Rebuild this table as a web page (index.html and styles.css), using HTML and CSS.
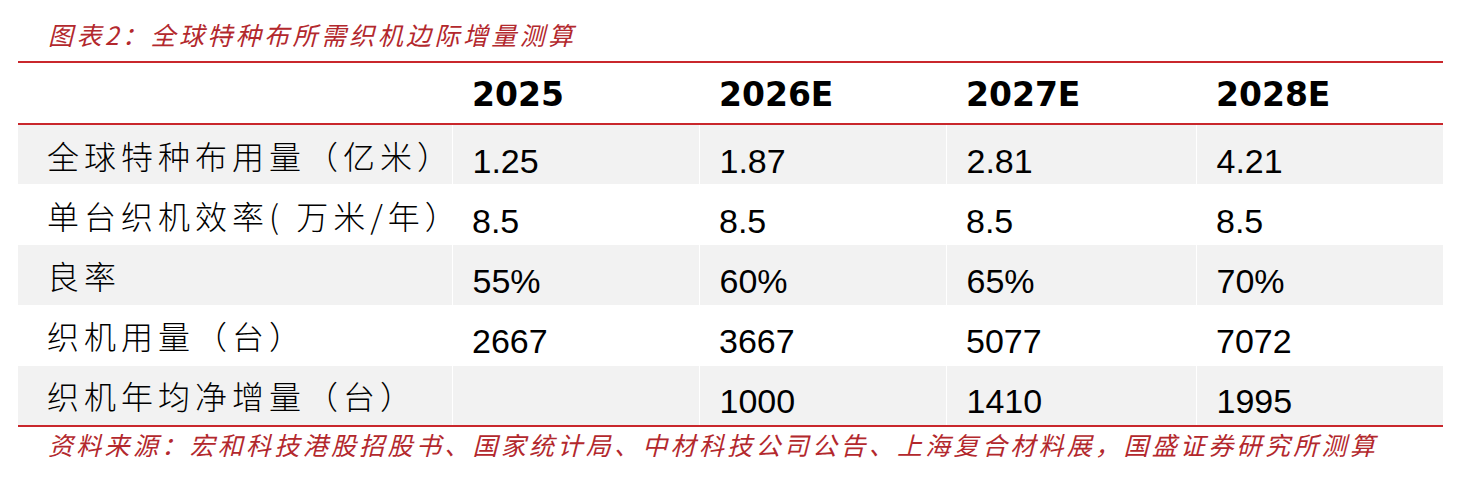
FILE: index.html
```html
<!DOCTYPE html>
<html lang="zh-CN">
<head>
<meta charset="utf-8">
<title>图表2</title>
<link rel="stylesheet" href="styles.css">
</head>
<body>
<div class="page">
  <div class="title">图表2：全球特种布所需织机边际增量测算</div>
  <table class="data">
    <colgroup>
      <col class="c-label">
      <col class="c-a">
      <col class="c-b">
      <col class="c-c">
      <col class="c-d">
    </colgroup>
    <thead>
      <tr class="head">
        <th></th>
        <th>2025</th>
        <th>2026E</th>
        <th>2027E</th>
        <th>2028E</th>
      </tr>
    </thead>
    <tbody>
      <tr class="grey">
        <td class="label">全球特种布用量（亿米）</td>
        <td>1.25</td><td>1.87</td><td>2.81</td><td>4.21</td>
      </tr>
      <tr>
        <td class="label">单台织机效率( 万米/年）</td>
        <td>8.5</td><td>8.5</td><td>8.5</td><td>8.5</td>
      </tr>
      <tr class="grey">
        <td class="label">良率</td>
        <td>55%</td><td>60%</td><td>65%</td><td>70%</td>
      </tr>
      <tr>
        <td class="label">织机用量（台）</td>
        <td>2667</td><td>3667</td><td>5077</td><td>7072</td>
      </tr>
      <tr class="grey last">
        <td class="label">织机年均净增量（台）</td>
        <td></td><td>1000</td><td>1410</td><td>1995</td>
      </tr>
    </tbody>
  </table>
  <div class="source">资料来源：宏和科技港股招股书、国家统计局、中材科技公司公告、上海复合材料展，国盛证券研究所测算</div>
</div>
</body>
</html>
```

FILE: styles.css
```css
html, body {
  margin: 0;
  padding: 0;
  background: #ffffff;
}

.page {
  width: 1425px;
  padding-left: 18px;
}

.title {
  height: 61px;
  padding-top: 6px;
  padding-left: 30px;
  box-sizing: border-box;
  display: flex;
  align-items: center;
  font-family: "Noto Sans CJK SC", "Liberation Sans", sans-serif;
  font-style: italic;
  font-weight: 400;
  font-size: 25px;
  letter-spacing: 3.4px;
  color: #b3282d;
  white-space: nowrap;
}

.data {
  width: 1425px;
  border-collapse: collapse;
  table-layout: fixed;
  border-top: 2px solid #c9272c;
  border-bottom: 2px solid #c9272c;
}

.c-label { width: 434px; }
.c-a { width: 247px; }
.c-b { width: 247px; }
.c-c { width: 250px; }
.c-d { width: 247px; }

.data th,
.data td {
  padding: 0 0 0 20px;
  text-align: left;
  white-space: nowrap;
  overflow: visible;
}

.head {
  height: 62px;
  border-bottom: 2px solid #c9272c;
}

.head th {
  font-family: "DejaVu Sans", "Liberation Sans", sans-serif;
  font-weight: 700;
  font-size: 33px;
  line-height: 36px;
  color: #000000;
  vertical-align: middle;
  padding-top: 4px;
}

.data tbody tr {
  height: 60.4px;
}

.data tbody td {
  font-family: "Liberation Sans", Arial, sans-serif;
  font-size: 34px;
  line-height: 40px;
  color: #000000;
  vertical-align: middle;
  padding-top: 12px;
}

.data tbody td.label {
  padding-left: 29px;
  padding-top: 0;
  font-family: "Noto Sans CJK SC", "Liberation Sans", sans-serif;
  font-weight: 300;
  font-size: 32px;
  letter-spacing: 5px;
}

.data tbody tr.grey {
  background: #f2f2f2;
}

.data tbody tr.grey td + td {
  border-left: 1px solid #ffffff;
}

.source {
  padding-top: 2px;
  padding-left: 30px;
  font-family: "Noto Sans CJK SC", "Liberation Sans", sans-serif;
  font-style: italic;
  font-weight: 400;
  font-size: 25px;
  line-height: 30px;
  letter-spacing: 3.3px;
  color: #b3282d;
  white-space: nowrap;
}
```
